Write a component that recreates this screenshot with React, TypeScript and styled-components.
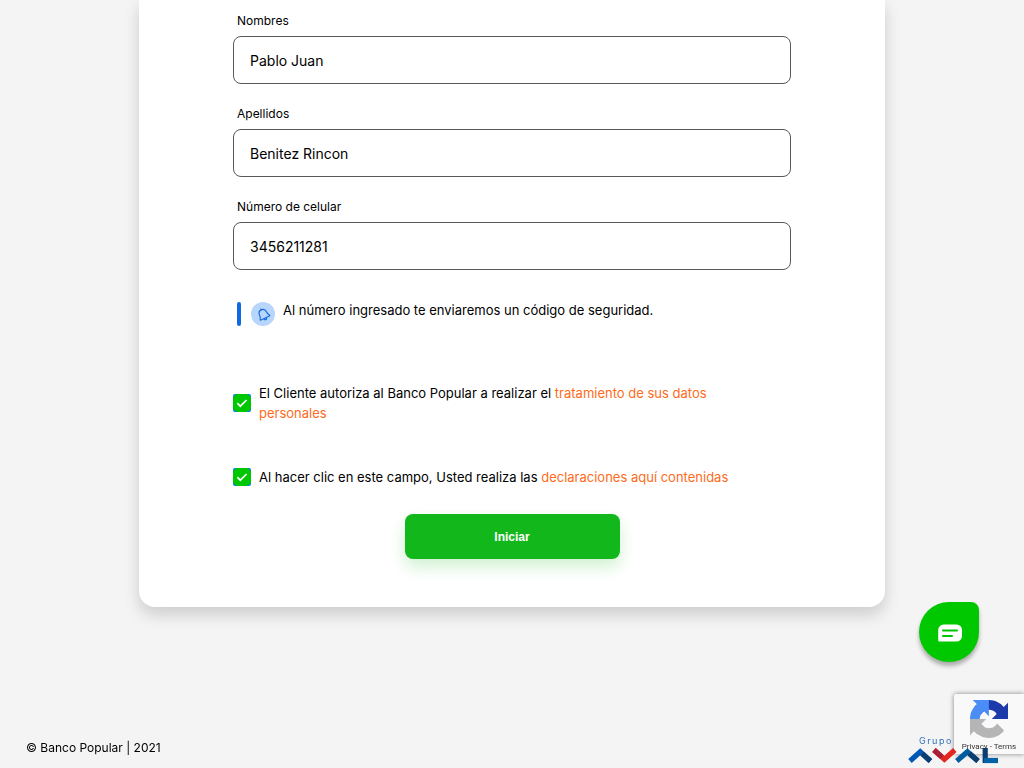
import React from "react";
import styled, { createGlobalStyle } from "styled-components";

const GlobalStyle = createGlobalStyle`
  *, *::before, *::after { box-sizing: border-box; }
  body {
    margin: 0;
    background: #f4f4f4;
    color: #000;
    font-family: Inter, "Liberation Sans", sans-serif;
    font-size: 13px;
    line-height: 20px;
  }
`;

const Page = styled.div`
  min-height: 100vh;
  display: flex;
  flex-direction: column;
  justify-content: space-between;
`;

const Main = styled.main`
  padding: 0 139px;
`;

const Card = styled.form`
  display: flex;
  flex-direction: column;
  padding: 13px 94px 48px;
  background: #fff;
  border-radius: 0 0 16px 16px;
  box-shadow: 0 8px 16px rgba(0, 0, 0, 0.16);
`;

const Fields = styled.div`
  display: flex;
  flex-direction: column;
  gap: 22px;
`;

const Field = styled.div`
  display: flex;
  flex-direction: column;
  gap: 7px;
`;

const FieldLabel = styled.label`
  padding-left: 4px;
  font-size: 12px;
  line-height: 16px;
`;

const TextInput = styled.input`
  width: 100%;
  height: 48px;
  padding: 0 16px;
  border: 1px solid #58595b;
  border-radius: 8px;
  background: #fff;
  color: #000;
  font: inherit;
  font-size: 14px;
`;

const Notice = styled.div`
  display: flex;
  align-items: flex-start;
  margin: 32px 0 57px;
  padding-left: 4px;
`;

const NoticeBar = styled.span`
  width: 4px;
  height: 24px;
  margin-right: 10px;
  border-radius: 2px;
  background: #1169e0;
`;

const NoticeIcon = styled.span`
  display: flex;
  align-items: center;
  justify-content: center;
  width: 24px;
  height: 24px;
  margin-right: 8px;
  border-radius: 50%;
  background: #b8d6fb;
`;

const NoticeText = styled.p`
  margin: 0;
  line-height: 16px;
`;

const Consents = styled.div`
  display: flex;
  flex-direction: column;
  gap: 44px;
`;

const Consent = styled.div`
  display: flex;
  align-items: center;
  gap: 8px;
  padding-right: 32px;
`;

const CheckWrap = styled.span`
  position: relative;
  flex: none;
  width: 18px;
  height: 18px;

  svg {
    position: absolute;
    inset: 0;
    pointer-events: none;
  }
`;

const CheckInput = styled.input`
  appearance: none;
  display: block;
  width: 18px;
  height: 18px;
  margin: 0;
  border-radius: 2px;
  background: #0d75ff;
`;

const Link = styled.a`
  color: #fd6b1b;
  text-decoration: none;
`;

const Submit = styled.button`
  align-self: center;
  width: 215px;
  height: 45px;
  margin-top: 27px;
  border: 0;
  border-radius: 8px;
  background: #12b81b;
  box-shadow: 0 8px 16px rgba(18, 184, 27, 0.2);
  color: #fff;
  font-family: "Liberation Sans", Arial, sans-serif;
  font-size: 12px;
  font-weight: 700;
`;

const Footer = styled.footer`
  position: relative;
  z-index: 2;
  display: flex;
  align-items: center;
  justify-content: space-between;
  padding: 0 26px 4px;
  font-size: 12px;

  p { margin: 0; }
`;

const ChatButton = styled.button`
  position: fixed;
  right: 45px;
  bottom: 106px;
  display: flex;
  align-items: center;
  justify-content: center;
  width: 60px;
  height: 60px;
  padding: 2px 0 0 2px;
  border: 0;
  border-radius: 50% 8px 50% 50%;
  background: #00c800;
  box-shadow: 0 4px 4px rgba(0, 0, 0, 0.3);
`;

const Recaptcha = styled.aside`
  position: fixed;
  right: 0;
  bottom: 14px;
  z-index: 1;
  display: flex;
  flex-direction: column;
  align-items: center;
  width: 70px;
  height: 60px;
  padding-top: 6px;
  border-radius: 2px 0 0 2px;
  background: #f9f9f9;
  box-shadow: 0 0 5px gray;
`;

const RecaptchaLinks = styled.div`
  margin-top: 3px;
  color: #333;
  font-family: Roboto, sans-serif;
  font-size: 8px;
  line-height: 12px;
  white-space: nowrap;

  a { color: #333; text-decoration: none; }
`;

const BellIcon = () => (
  <svg width="15" height="15" viewBox="0 0 14 14" fill="none" stroke="#1169e0" strokeWidth="1.100" strokeLinecap="round" strokeLinejoin="round" aria-hidden="true">
    <g transform="rotate(-26 7 7)">
      <path d="M7 2.200c-2.300 0-3.600 1.700-3.600 3.900 0 2-.6 2.900-1.200 3.700-.3.500 0 .9.500.9h8.600c.5 0 .8-.4.500-.9-.6-.8-1.200-1.700-1.200-3.700C10.600 3.900 9.300 2.200 7 2.200zM7 2.200V1.200M5.700 10.800c.2 1 .7 1.500 1.300 1.500s1.100-.5 1.300-1.500" />
    </g>
  </svg>
);

const CheckIcon = () => (
  <svg width="18" height="18" viewBox="0 0 18 18" fill="none" aria-hidden="true">
    <rect width="18" height="18" rx="5" fill="#00c800" />
    <path d="M4.300 9.200l3 3 6.300-6.200" stroke="#fff" strokeWidth="1.700" />
  </svg>
);

const ChatIcon = () => (
  <svg width="24" height="18" viewBox="0 0 24 18" fill="none" aria-hidden="true">
    <path d="M5.500 0.500h13a5.500 5.500 0 0 1 5.500 5.500v6a5.500 5.500 0 0 1-5.500 5.500H1.200a1 1 0 0 1-1-1V6a5.500 5.500 0 0 1 5.300-5.500z" fill="#fff" />
    <path d="M5 6.500h14M5 12h9" stroke="#00c800" strokeWidth="2" strokeLinecap="round" />
  </svg>
);

const RecaptchaLogo = () => (
  <svg width="38" height="38" viewBox="0 0 64 64" aria-hidden="true">
    <path fill="#1c3aa9" d="M64 31.955l-.033-1.370V4.687l-7.160 7.160C50.948 4.674 42.033.093 32.050.093c-10.400 0-19.622 4.960-25.458 12.640l11.736 11.860a15.550 15.550 0 0 1 4.754-5.334c2.050-1.600 4.952-2.906 8.968-2.906.485 0 .860.057 1.135.163 4.976.393 9.288 3.140 11.828 7.124l-8.307 8.307L64 31.953" />
    <path fill="#4a8df6" d="M31.862.094l-1.370.033H4.594l7.160 7.160C4.580 13.147 0 22.060 0 32.046c0 10.400 4.960 19.622 12.640 25.458L24.500 45.768a15.550 15.550 0 0 1-5.334-4.754c-1.600-2.050-2.906-4.952-2.906-8.968 0-.485.057-.860.163-1.135.393-4.976 3.140-9.288 7.124-11.828l8.307 8.307L31.860.095" />
    <path fill="#b5b5b5" d="M.001 32.045l.033 1.370v25.898l7.160-7.160c5.860 7.173 14.774 11.754 24.760 11.754 10.400 0 19.622-4.960 25.458-12.640l-11.736-11.860a15.550 15.550 0 0 1-4.754 5.334c-2.050 1.600-4.952 2.906-8.968 2.906-.485 0-.860-.057-1.135-.163-4.976-.393-9.288-3.140-11.828-7.124l8.307-8.307c-10.522.040-22.400.066-27.295-.005" />
  </svg>
);

const AvalLogo = () => (
  <svg width="90" height="32" viewBox="0 0 90 32" fill="none" role="img" aria-label="Grupo Aval">
    <text x="11" y="12" fontSize="9" fontFamily="Inter, sans-serif" letterSpacing="1.500" fill="#2a6fba">Grupo</text>
    <g strokeWidth="5.200">
      <path d="M2 29L12.200 19.800L22.400 29" stroke="#0057b4" />
      <path d="M14.200 21.600L22.400 29" stroke="#0b3d6e" />
      <path d="M26 18L36.400 27.200L46.800 18" stroke="#e5251f" />
      <path d="M26 18L34 25.100" stroke="#a81f38" />
      <path d="M48.800 29L59.400 19.800L70 29" stroke="#005b9f" />
      <path d="M61.400 21.500L70 29" stroke="#0b3d6e" />
      <path d="M77.200 16V31" stroke="#0b3d6e" />
      <path d="M76 28.500H90" stroke="#0362a6" />
    </g>
  </svg>
);

const fields = [
  { id: "nombres", label: "Nombres", value: "Pablo Juan", type: "text" },
  { id: "apellidos", label: "Apellidos", value: "Benitez Rincon", type: "text" },
  { id: "celular", label: "Número de celular", value: "3456211281", type: "tel" },
];

const consents = [
  { id: "datos", text: "El Cliente autoriza al Banco Popular a realizar el ", link: "tratamiento de sus datos personales" },
  { id: "declaraciones", text: "Al hacer clic en este campo, Usted realiza las ", link: "declaraciones aquí contenidas" },
];

export default function App() {
  return (
    <Page>
      <GlobalStyle />
      <Main>
        <Card onSubmit={(event: React.FormEvent) => event.preventDefault()}>
          <Fields>
            {fields.map((field) => (
              <Field key={field.id}>
                <FieldLabel htmlFor={field.id}>{field.label}</FieldLabel>
                <TextInput id={field.id} type={field.type} defaultValue={field.value} />
              </Field>
            ))}
          </Fields>
          <Notice>
            <NoticeBar />
            <NoticeIcon>
              <BellIcon />
            </NoticeIcon>
            <NoticeText>Al número ingresado te enviaremos un código de seguridad.</NoticeText>
          </Notice>
          <Consents>
            {consents.map((consent) => (
              <Consent key={consent.id}>
                <CheckWrap>
                  <CheckInput id={consent.id} type="checkbox" defaultChecked />
                  <CheckIcon />
                </CheckWrap>
                <label htmlFor={consent.id}>
                  {consent.text}
                  <Link href="#">{consent.link}</Link>
                </label>
              </Consent>
            ))}
          </Consents>
          <Submit type="submit">Iniciar</Submit>
        </Card>
      </Main>
      <Footer>
        <p>© Banco Popular | 2021</p>
        <AvalLogo />
      </Footer>
      <ChatButton type="button" aria-label="Chat">
        <ChatIcon />
      </ChatButton>
      <Recaptcha>
        <RecaptchaLogo />
        <RecaptchaLinks>
          <a href="#">Privacy</a> - <a href="#">Terms</a>
        </RecaptchaLinks>
      </Recaptcha>
    </Page>
  );
}
